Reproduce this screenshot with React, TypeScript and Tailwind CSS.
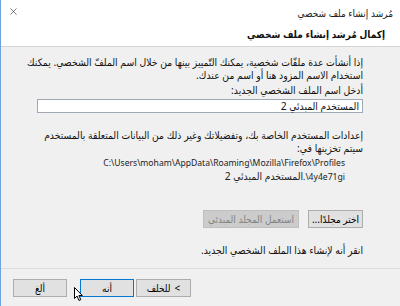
import { X } from "lucide-react"
import type { ReactNode } from "react"

function Btn({ children, className = "", disabled = false, focus = false }: { children: ReactNode; className?: string; disabled?: boolean; focus?: boolean }) {
  return (
    <div
      className={
        "h-[18px] flex items-center justify-center gap-[4px] border whitespace-nowrap leading-none " +
        (disabled
          ? "bg-[#cccccc] border-[#bfbfbf] text-[#838383] "
          : focus
          ? "bg-[#e1e1e1] border-[#0078d7] text-black "
          : "bg-[#e1e1e1] border-[#adadad] text-black ") +
        className
      }
    >
      {children}
    </div>
  )
}

export default function App() {
  return (
    <div
      dir="rtl"
      className="relative w-[400px] h-[306px] bg-[#f0f0f0] border-l border-[#6fa3dc] overflow-hidden text-[10px] text-[#111]"
      style={{ fontFamily: '"Noto Sans", "DejaVu Sans Condensed", "DejaVu Sans", sans-serif' }}
    >
      {/* header */}
      <div className="h-[47px] bg-white border-b border-[#d6d6d6] relative">
        <div className="pr-[7px] pt-[7px] leading-[13px] text-[#222]">مُرشد إنشاء ملف شخصي</div>
        <div className="pr-[15px] pt-[8px] leading-[13px] font-bold">إكمال مُرشد إنشاء ملف شخصي</div>
        <X className="absolute left-[7px] top-[6px] w-[11px] h-[11px] text-[#444]" strokeWidth={1.5} />
      </div>

      {/* body */}
      <div className="pr-[37px] pl-[36px] pt-[9px] leading-[13px] text-[10.3px]">
        <p className="whitespace-nowrap">
          إذا أنشأت عدة ملفّات شخصية، يمكنك التّمييز بينها من خلال اسم الملفّ الشخصي. يمكنك
          <br />
          استخدام الاسم المزود هنا أو اسم من عندك.
        </p>
        <p className="mt-[2px]">أدخل اسم الملف الشخصي الجديد:</p>
        <div className="mt-[2px] h-[14px] bg-white border border-[#a0a8b4] flex items-center pr-[3px]">المستخدم المبدئي 2</div>
        <p className="mt-[16px]">إعدادات المستخدم الخاصة بك، وتفضيلاتك وغير ذلك من البيانات المتعلقة بالمستخدم سيتم تخزينها في:</p>
        <div className="mt-[2px] pr-[18px] text-[8.6px] text-[#222]" dir="ltr">
          <div className="text-right">C:\Users\moham\AppData\Roaming\Mozilla\Firefox\Profiles</div>
          <div className="text-right">
            <span dir="rtl" className="text-[10.3px]">المستخدم المبدئي 2</span>
            <span>.\4y4e71gi</span>
          </div>
        </div>
        <div className="mt-[26px] flex gap-[9px] text-[10px]">
          <Btn className="w-[55px]">اختر مجلدًا...</Btn>
          <Btn className="w-[96px]" disabled>استعمل المجلد المبدئي</Btn>
        </div>
        <p className="mt-[16px]">انقر أنه لإنشاء هذا الملف الشخصي الجديد.</p>
      </div>

      {/* footer */}
      <div className="absolute left-0 right-0 top-[268px] border-t border-[#dcdcdc]" />
      <div className="absolute left-[12px] top-[279px] flex flex-row-reverse gap-[2px]" dir="ltr">
        <Btn className="w-[55px]">
          <span dir="rtl">للخلف</span>
          <span>&lt;</span>
        </Btn>
        <Btn className="w-[54px]" focus>أنه</Btn>
        <div className="w-[9px]" />
        <Btn className="w-[54px]">ألغ</Btn>
      </div>

      {/* mouse pointer */}
      <svg className="absolute left-[73px] top-[287px]" width="10" height="15" viewBox="0 0 10 15">
        <path d="M0.5 0.5 L0.5 11.5 L3 9 L5 13.5 L6.8 12.7 L4.9 8.5 L8.3 8.5 Z" fill="white" stroke="black" strokeWidth="1" />
      </svg>
    </div>
  )
}
